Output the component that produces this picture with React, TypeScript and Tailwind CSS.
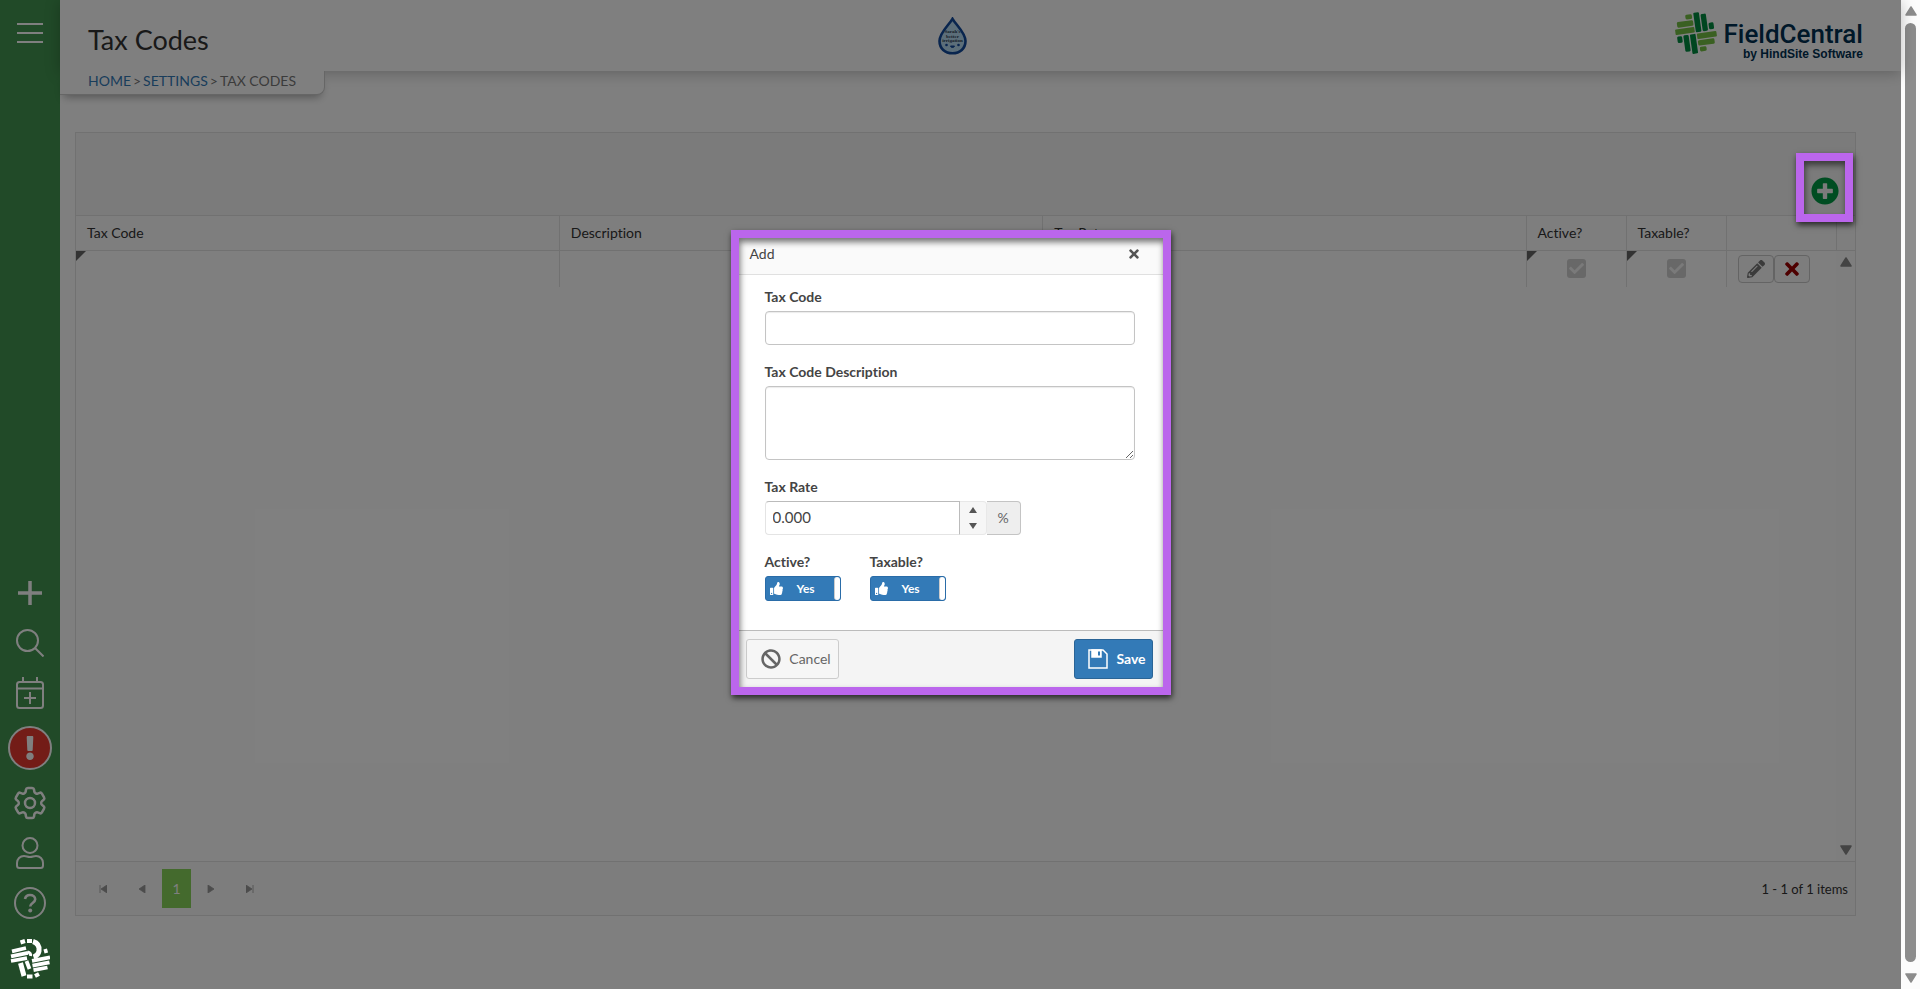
import { useState } from 'react';
import { HiOutlineCog6Tooth } from 'react-icons/hi2';
import { FaBan, FaCheck, FaExclamation, FaPencilAlt, FaPlusCircle, FaThumbsUp, FaTimes } from 'react-icons/fa';

type WeaveProps = {
    light: string;
    dark: string;
    className?: string;
};

const WeaveLogo = ({ light, dark, className }: WeaveProps) => (
    <svg viewBox="112 32 126 126" className={className} aria-hidden="true">
        <g transform="rotate(-8 175 95)">
            <g fill={light}>
                <rect x="150" y="37" width="20" height="14" rx="4" />
                <rect x="122" y="55" width="49" height="17" rx="4" />
                <rect x="114" y="76" width="58" height="17" rx="3" />
                <rect x="177" y="97" width="59" height="17" rx="3" />
                <rect x="177" y="118" width="50" height="16" rx="4" />
                <rect x="180" y="138" width="20" height="14" rx="4" />
            </g>
            <g fill={dark}>
                <rect x="175" y="34" width="17" height="59" rx="3" />
                <rect x="196" y="41" width="16" height="52" rx="4" />
                <rect x="216" y="70" width="15" height="20" rx="4" />
                <rect x="156" y="97" width="17" height="59" rx="3" />
                <rect x="136" y="97" width="16" height="50" rx="4" />
                <rect x="117" y="98" width="15" height="20" rx="4" />
            </g>
        </g>
    </svg>
);

const KnotLogo = () => (
    <svg viewBox="0 0 40 40" className="w-10 h-10 text-white" aria-hidden="true" stroke="currentColor" fill="none" strokeWidth="3.600">
        <path d="M10.500 3.500l4.500-1.500M17 2h5" strokeWidth="4" />
        <path d="M23 2.500c5 1.500 6.500 5.500 6 9.500-.5 3-2.500 5-5.500 6" strokeWidth="5" />
        <path d="M2 12.300l14-3.300M1 17.300l17-3.500M1 22l16-2.800" strokeWidth="3.800" />
        <path d="M17.500 13c2.500.5 3.500 2 3 4" strokeWidth="3" />
        <path d="M10.500 24l3.500 13" strokeWidth="5" />
        <path d="M16.500 22l3 8" strokeWidth="3.800" />
        <path d="M22 21.800l18-3.500M22.500 26.600l17-3.300M23.500 31.200l14-2.700" strokeWidth="3.800" />
        <path d="M17 37.500h5.500M25 37l4-2" strokeWidth="4" />
        <path d="M34 12.500l3.500-1" strokeWidth="4" />
    </svg>
);

const DropLogo = () => (
    <svg viewBox="0 0 29 38" className="w-[29px] h-[38px]" role="img" aria-label="Company logo">
        <path d="M14.500 1.800C11 8 1.500 15.500 1.500 24c0 7.500 5.500 12.300 13 12.300s13-4.800 13-12.300C27.500 15.500 18 8 14.500 1.800z" fill="#b9dcf3" stroke="#124a9c" strokeWidth="2.600" />
        <g fill="#2c3c50" fontSize="5" fontFamily="Liberation Serif, serif" fontWeight="700" textAnchor="middle">
            <text x="14.500" y="16">Sarah's</text>
            <text x="14.500" y="20.500">better</text>
            <text x="14.500" y="25">irrigation</text>
        </g>
        <circle cx="8.500" cy="28" r="1.300" fill="#124a9c" />
        <circle cx="20.500" cy="28" r="1.300" fill="#124a9c" />
        <path d="M12.500 29c.5 2 3.500 2 4 0z" fill="#124a9c" stroke="#124a9c" />
    </svg>
);

const strokeProps = {
    fill: 'none',
    stroke: 'currentColor',
    strokeWidth: 2,
    'aria-hidden': true,
};

const MenuIcon = () => (
    <svg viewBox="0 0 26 22" className="w-[26px] h-[22px]" {...strokeProps}>
        <path d="M0 2h26M0 11h26M0 20h26" />
    </svg>
);

const sideItems = [
    {
        label: 'Add new',
        icon: (
            <svg viewBox="0 0 26 26" className="w-[26px]" {...strokeProps} strokeWidth={3.5}>
                <path d="M13 1v24M1 13h24" />
            </svg>
        ),
    },
    {
        label: 'Search',
        icon: (
            <svg viewBox="0 0 28 28" className="w-7" {...strokeProps}>
                <circle cx="11.5" cy="11.500" r="10.500" />
                <path d="M19 19l8.500 8.500" />
            </svg>
        ),
    },
    {
        label: 'Schedule',
        icon: (
            <svg viewBox="0 0 28 32" className="w-7" {...strokeProps}>
                <rect x="1" y="5" width="26" height="26" rx="2.500" />
                <path d="M1 11.500h26M7 0v5M21 0v5M14 15v12M8 21h12" />
            </svg>
        ),
    },
    { label: 'Alerts', alert: true, icon: <FaExclamation className="w-6 h-6" /> },
    { label: 'Settings', icon: <HiOutlineCog6Tooth className="w-10 h-10" /> },
    {
        label: 'Account',
        icon: (
            <svg viewBox="0 0 28 32" className="w-7" {...strokeProps}>
                <circle cx="14" cy="8.500" r="7.500" />
                <path d="M8 19c2.500 0 3.500 1 6 1s3.500-1 6-1c4 0 7 3 7 7v2.500c0 1.500-1 2.500-2.500 2.500h-21C2 31 1 30 1 28.500V26c0-4 3-7 7-7z" />
            </svg>
        ),
    },
    {
        label: 'Help',
        icon: (
            <svg viewBox="0 0 32 32" className="w-8" {...strokeProps}>
                <circle cx="16" cy="16" r="15" />
                <path d="M11 12c.5-2.500 2.500-4 5-4 3 0 5.200 1.700 5.200 4.300 0 3.700-5 3.700-5 7.200" strokeWidth="2.600" />
                <circle cx="16.200" cy="23.500" r="2" fill="currentColor" stroke="none" />
            </svg>
        ),
    },
];

// Purple call-out frame drawn over whatever it sits in
const Highlight = ({ className }: { className: string }) => (
    <div
        className={`absolute border-8 border-[#bb66ec] pointer-events-none shadow-[1px_3px_6px_rgba(0,0,0,0.7),inset_1px_4px_6px_rgba(0,0,0,0.55)] ${className}`}
    />
);

const Sidebar = () => (
    <nav className="w-[60px] shrink-0 bg-[#429450] text-white flex flex-col items-center">
        <button aria-label="Menu" className="w-full h-[66px] flex items-center justify-center">
            <MenuIcon />
        </button>
        <div className="mt-auto w-full flex flex-col">
            {sideItems.map((item) => (
                <button
                    key={item.label}
                    aria-label={item.label}
                    className={`w-full flex items-center justify-center ${item.alert ? 'h-[60px]' : 'h-[50px]'}`}
                >
                    {item.alert ? (
                        <span className="w-11 h-11 rounded-full border-2 border-white bg-[#e6392f] flex items-center justify-center">
                            {item.icon}
                        </span>
                    ) : (
                        item.icon
                    )}
                </button>
            ))}
            <a href="#" aria-label="FieldCentral" className="relative z-20 h-[61px] flex items-center justify-center">
                <KnotLogo />
            </a>
        </div>
    </nav>
);

const Header = () => (
    <header>
        <div className="h-[71px] pl-7 pr-[38px] flex items-center justify-between shadow-[0_2px_14px_rgba(0,0,0,0.25)]">
            <h1 className="flex-1 text-[27px] leading-9 pt-2 text-[#333]">Tax Codes</h1>
            <DropLogo />
            <div className="flex-1 flex justify-end gap-1.5 pl-[46px]">
                <WeaveLogo light="#74c044" dark="#008c40" className="w-[42px] h-[42px]" />
                <div className="text-[#003052] pt-2">
                    <div className="text-[26px] leading-7 font-medium font-[Roboto,sans-serif]">FieldCentral</div>
                    <div className="text-xs leading-3 font-bold text-right font-['Liberation_Sans',sans-serif]">by HindSite Software</div>
                </div>
            </div>
        </div>
        <div className="relative flex w-fit items-start gap-0.5 h-6 pl-7 pr-7 bg-white border-b border-r border-[#ccc] rounded-br-lg shadow-[0_6px_8px_-4px_rgba(0,0,0,0.35)] text-sm leading-5 text-[#777]">
            <a href="#" className="text-[#337ab7]">HOME</a>
            <span>&gt;</span>
            <a href="#" className="text-[#337ab7]">SETTINGS</a>
            <span>&gt;</span>
            <span>TAX CODES</span>
        </div>
    </header>
);

const CellCheck = ({ label }: { label: string }) => (
    <div className="relative w-[19px] h-[19px] mx-auto">
        <input type="checkbox" checked disabled readOnly aria-label={label} className="block appearance-none w-full h-full rounded-[3px] bg-[#d0d0d0]" />
        <FaCheck className="absolute inset-0 m-auto w-[15px] h-[15px] text-[#f4f4f4]" />
    </div>
);

const Dirty = () => <span className="absolute top-0 left-0 border-t-[10px] border-r-[10px] border-t-[#666] border-r-transparent" />;

const columns = ['Tax Code', 'Description', 'Tax Rate', 'Active?', 'Taxable?', '', ''];

const pagerIcons = {
    first: 'M1 0v8M8 0v8L2 4z',
    prev: 'M7 0v8L1 4z',
    next: 'M1 0v8l6-4z',
    last: 'M7 0v8M0 0v8l6-4z',
};

const PagerButton = ({ kind }: { kind: keyof typeof pagerIcons }) => (
    <button aria-label={kind} className="w-[38px] h-[39px] flex items-center justify-center text-[#999]">
        <svg viewBox="0 0 8 8" className="w-2 h-2" fill="currentColor" stroke="currentColor" strokeWidth="0.800">
            <path d={pagerIcons[kind]} />
        </svg>
    </button>
);

const ScrollArrow = ({ down }: { down?: boolean }) => (
    <svg viewBox="0 0 12 10" className={`w-3 h-2.5 ${down ? 'rotate-180' : ''}`} aria-hidden="true">
        <path d="M6 1l5 8H1z" fill="currentColor" stroke="currentColor" strokeWidth="1.500" strokeLinejoin="round" />
    </svg>
);

const Grid = () => (
    <section className="ml-[15px] mr-[45px] mt-[37px] border border-[#e2e2e2] text-sm leading-5 text-[#333]">
        <div className="h-[82px] bg-[#f6f6f6] flex justify-end items-end pr-4 pb-2.5">
            <div className="relative">
                <button aria-label="Add tax code" className="block text-[#009a44]">
                    <FaPlusCircle className="w-7 h-7" />
                </button>
                <Highlight className="z-20 -left-[15px] -right-[14px] -top-[24px] -bottom-[17px]" />
            </div>
        </div>
        <div className="relative h-[646px] bg-white">
            <table className="w-full table-fixed border-collapse">
                <colgroup>
                    <col />
                    <col />
                    <col />
                    <col className="w-[100px]" />
                    <col className="w-[100px]" />
                    <col className="w-[110px]" />
                    <col className="w-[19px]" />
                </colgroup>
                <thead>
                    <tr className="bg-[#fcfcfc]">
                        {columns.map((name, index) => (
                            <th key={index} className="h-[35px] px-[11px] text-left font-normal border-y border-l first:border-l-0 border-[#e2e2e2]">
                                {name}
                            </th>
                        ))}
                    </tr>
                </thead>
                <tbody>
                    <tr>
                        <td className="relative h-9"><Dirty /></td>
                        <td className="border-l border-[#e2e2e2]" />
                        <td className="border-l border-[#e2e2e2]" />
                        <td className="relative border-l border-[#e2e2e2]"><Dirty /><CellCheck label="Active" /></td>
                        <td className="relative border-l border-[#e2e2e2]"><Dirty /><CellCheck label="Taxable" /></td>
                        <td className="border-l border-[#e2e2e2]">
                            <div className="flex pl-[11px]">
                                <button aria-label="Edit" className="w-9 h-7 border border-[#c8c8c8] rounded-[4px] bg-[#fafafa] flex items-center justify-center text-[#777]">
                                    <FaPencilAlt className="w-[18px] h-[18px]" />
                                </button>
                                <button aria-label="Delete" className="w-9 h-7 border border-[#c8c8c8] rounded-[4px] bg-[#fafafa] flex items-center justify-center text-[#9c0000]">
                                    <FaTimes className="w-5 h-5" />
                                </button>
                            </div>
                        </td>
                        <td />
                    </tr>
                </tbody>
            </table>
            <div className="absolute right-0 top-9 bottom-0 w-[19px] bg-[#fcfcfc] text-[#888] flex flex-col items-center justify-between py-1.5">
                <ScrollArrow />
                <ScrollArrow down />
            </div>
        </div>
        <div className="h-[54px] border-t border-[#e2e2e2] bg-[#fafafa] flex items-center gap-px pl-2 pr-[7px]">
            <PagerButton kind="first" />
            <PagerButton kind="prev" />
            <button className="w-[29px] h-[39px] bg-[#88d45a] text-white">1</button>
            <PagerButton kind="next" />
            <PagerButton kind="last" />
            <span className="ml-auto text-[13px]">1 - 1 of 1 items</span>
        </div>
    </section>
);

const Toggle = ({ id, label }: { id: string; label: string }) => {
    const [on, setOn] = useState(true);

    return (
        <div className="w-[76px]">
            <label htmlFor={id} className="block font-bold leading-5 mb-1">{label}</label>
            <div className={`relative h-[25px] border border-[#2a6ca8] rounded-[3px] flex items-center px-1 text-xs text-white ${on ? 'bg-[#337ab7]' : 'bg-[#999]'}`}>
                <FaThumbsUp className="w-[13px] h-[13px]" />
                <span className="ml-3.5 font-bold">{on ? 'Yes' : 'No'}</span>
                <span className="absolute right-0 inset-y-0 w-1.5 bg-white rounded-sm border-l border-[#ccc]" />
                <input id={id} type="checkbox" checked={on} onChange={() => setOn(!on)} className="absolute inset-0 w-full h-full appearance-none cursor-pointer" />
            </div>
        </div>
    );
};

const AddDialog = () => {
    const [rate, setRate] = useState('0.000');

    const step = (amount: number) => setRate(Math.max(0, Number(rate) + amount).toFixed(3));

    return (
        <div role="dialog" aria-label="Add" className="relative w-[440px] p-2 text-sm text-[#444]">
            <div className="h-[37px] pl-[11px] pr-[22px] pb-1 bg-[#fafafa] border-b border-[#e0e0e0] flex items-center justify-between">
                <h2 className="leading-5">Add</h2>
                <button aria-label="Close" className="text-[#555]">
                    <FaTimes className="w-3.5 h-3.5" />
                </button>
            </div>
            <div className="bg-white px-[26px] pt-3 pb-[29px] flex flex-col gap-[17px]">
                <div>
                    <label htmlFor="code" className="block font-bold leading-5 mb-1">Tax Code</label>
                    <input id="code" className="block w-[370px] h-[34px] px-2 border border-[#c4c4c4] rounded-[4px] shadow-[inset_0_1px_1px_rgba(0,0,0,0.08)]" />
                </div>
                <div>
                    <label htmlFor="description" className="block font-bold leading-5 mb-1">Tax Code Description</label>
                    <textarea id="description" className="block w-[370px] h-[74px] px-2 border border-[#c4c4c4] rounded-[4px] shadow-[inset_0_1px_1px_rgba(0,0,0,0.08)]" />
                </div>
                <div>
                    <label htmlFor="rate" className="block font-bold leading-5 mb-1">Tax Rate</label>
                    <div className="flex h-[34px]">
                        <input
                            id="rate"
                            value={rate}
                            onChange={(e) => setRate(e.target.value)}
                            className="w-[195px] px-[7px] text-[15px] border border-[#e4e4e4] border-t-[#bbb] border-r-[#bbb] rounded-l-[4px]"
                        />
                        <div className="w-[27px] border-y border-r border-[#e8e8e8] bg-[#f6f6f6] rounded-r-[4px] flex flex-col text-[#555]">
                            <button aria-label="Increase" onClick={() => step(1)} className="flex-1 flex items-center justify-center">
                                <svg viewBox="0 0 8 6" className="w-2 h-1.5" fill="currentColor"><path d="M4 0l4 6H0z" /></svg>
                            </button>
                            <button aria-label="Decrease" onClick={() => step(-1)} className="flex-1 flex items-center justify-center">
                                <svg viewBox="0 0 8 6" className="w-2 h-1.5" fill="currentColor"><path d="M4 6l4-6H0z" /></svg>
                            </button>
                        </div>
                        <span className="w-[34px] border border-l-0 border-[#c4c4c4] bg-[#eee] rounded-r-[4px] flex items-center justify-center text-[#666]">%</span>
                    </div>
                </div>
                <div className="flex gap-[29px]">
                    <Toggle id="active" label="Active?" />
                    <Toggle id="taxable" label="Taxable?" />
                </div>
            </div>
            <div className="h-[57px] border-t border-[#bbb] bg-[#f4f4f4] pl-[7px] pr-2.5 flex items-center justify-between">
                <button className="h-10 w-[93px] border border-[#ccc] rounded-[3px] bg-[#f6f6f6] flex items-center justify-center gap-2 pl-2 text-[#666]">
                    <FaBan className="w-5 h-5" />
                    Cancel
                </button>
                <button className="h-10 w-[79px] border border-[#2a6496] rounded-[3px] bg-[#337ab7] flex items-center justify-center gap-2 pl-2 text-white font-bold">
                    <svg viewBox="0 0 20 20" className="w-5 h-5" aria-hidden="true" fill="none" stroke="currentColor" strokeWidth="1.500">
                        <path d="M1 1h14l4 4v14H1z" />
                        <path d="M4 1h9v7H4z" fill="currentColor" />
                        <path d="M11 2.500v4" stroke="#337ab7" strokeWidth="2" />
                    </svg>
                    Save
                </button>
            </div>
            <Highlight className="inset-0" />
        </div>
    );
};

const PageScrollbar = () => (
    <div className="w-[19px] shrink-0 bg-[#fcfcfc] text-[#8c8c8c] flex flex-col items-center gap-[7px] py-1.5">
        <ScrollArrow />
        <div className="w-[11px] flex-1 rounded-full bg-[#8c8c8c] mb-1" />
        <ScrollArrow down />
    </div>
);

const App = () => {
    return (
        <div className="flex min-h-screen bg-white font-[Lato,sans-serif] [font-variant-ligatures:none]">
            <div className="relative flex-1 flex min-w-0">
                <Sidebar />
                <main className="flex-1 min-w-0">
                    <Header />
                    <Grid />
                </main>
                <div className="absolute inset-0 z-10 bg-black/50" />
                <div className="absolute inset-x-0 top-[230px] z-30 flex justify-center">
                    <AddDialog />
                </div>
            </div>
            <PageScrollbar />
        </div>
    );
};

export default App;
